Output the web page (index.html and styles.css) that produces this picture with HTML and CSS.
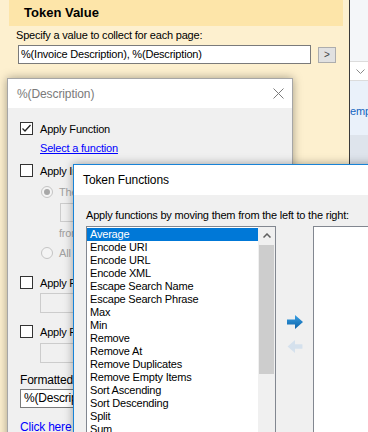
FILE: index.html
```html
<!DOCTYPE html>
<html lang="en">
<head>
    <meta charset="UTF-8">
    <meta name="viewport" content="width=device-width, initial-scale=1.0">
    <title>Token Functions</title>
    <link rel="stylesheet" href="styles.css">
</head>
<body>
    <div class="desktop">
        <div class="token-panel">
            <div class="panel-header">Token Value</div>
            <div class="panel-label">Specify a value to collect for each page:</div>
            <div class="value-row">
                <div class="value-input">%(Invoice Description), %(Description)</div>
                <button class="more-btn">&gt;</button>
            </div>
        </div>

        <div class="side-strip">
            <div class="side-top"></div>
            <div class="side-combo">
                <svg width="9" height="5" viewBox="0 0 9 5"><polyline points="0.5,0.5 4.5,4.5 8.5,0.5" fill="none" stroke="#8a8a8a" stroke-width="1"/></svg>
            </div>
            <div class="side-link">emplates</div>
            <div class="side-grey"></div>
        </div>

        <div class="window desc-window">
            <div class="title-bar">
                <span class="title inactive">%(Description)</span>
                <svg class="close-icon" width="11" height="11" viewBox="0 0 11 11"><path d="M0.5 0.5 L10.5 10.5 M10.5 0.5 L0.5 10.5" stroke="#7a7a7a" stroke-width="1"/></svg>
            </div>
            <div class="desc-body">
                <div class="check-row first">
                    <span class="checkbox">
                        <svg width="11" height="11" viewBox="0 0 11 11"><polyline points="1.5,5.5 4,8 9.5,2" fill="none" stroke="#222" stroke-width="1.3"/></svg>
                    </span>
                    <span>Apply Function</span>
                </div>
                <div class="link-row"><a href="#">Select a function</a></div>
                <div class="check-row gap-9">
                    <span class="checkbox"></span>
                    <span>Apply Index</span>
                </div>
                <div class="radio-row gap-9">
                    <span class="radio checked"></span>
                    <span>The item at position</span>
                </div>
                <div class="textbox disabled indent-2"></div>
                <div class="muted-row">from the end</div>
                <div class="radio-row gap-8">
                    <span class="radio"></span>
                    <span>All items</span>
                </div>
                <div class="check-row gap-17">
                    <span class="checkbox"></span>
                    <span>Apply Format</span>
                </div>
                <div class="textbox disabled indent-1 tall gap-4"></div>
                <div class="check-row gap-12">
                    <span class="checkbox"></span>
                    <span>Apply Filter</span>
                </div>
                <div class="textbox disabled indent-1 tall gap-5"></div>
                <div class="plain-row">Formatted Token:</div>
                <div class="textbox filled">%(Description)</div>
                <div class="link-row bottom"><a href="#">Click here to test</a></div>
            </div>
        </div>

        <div class="window fn-window">
            <div class="title-bar">
                <span class="title">Token Functions</span>
            </div>
            <div class="fn-body">
                <div class="fn-label">Apply functions by moving them from the left to the right:</div>
                <div class="fn-lists">
                    <div class="listbox source">
                        <div class="list-items">
                            <div class="list-item selected">Average</div>
                            <div class="list-item">Encode URI</div>
                            <div class="list-item">Encode URL</div>
                            <div class="list-item">Encode XML</div>
                            <div class="list-item">Escape Search Name</div>
                            <div class="list-item">Escape Search Phrase</div>
                            <div class="list-item">Max</div>
                            <div class="list-item">Min</div>
                            <div class="list-item">Remove</div>
                            <div class="list-item">Remove At</div>
                            <div class="list-item">Remove Duplicates</div>
                            <div class="list-item">Remove Empty Items</div>
                            <div class="list-item">Sort Ascending</div>
                            <div class="list-item">Sort Descending</div>
                            <div class="list-item">Split</div>
                            <div class="list-item">Sum</div>
                        </div>
                        <div class="scrollbar">
                            <div class="scroll-btn">
                                <svg width="8" height="5" viewBox="0 0 8 5"><polyline points="0.5,4.5 4,1 7.5,4.5" fill="none" stroke="#606060" stroke-width="1.5"/></svg>
                            </div>
                            <div class="scroll-thumb"></div>
                            <div class="scroll-space"></div>
                            <div class="scroll-btn">
                                <svg width="8" height="5" viewBox="0 0 8 5"><polyline points="0.5,0.5 4,4 7.5,0.5" fill="none" stroke="#606060" stroke-width="1.5"/></svg>
                            </div>
                        </div>
                    </div>
                    <div class="move-buttons">
                        <svg width="16" height="14" viewBox="0 0 16 14">
                            <defs>
                                <linearGradient id="blueArrow" x1="0" y1="0" x2="0" y2="1">
                                    <stop offset="0" stop-color="#3aa0e4"/>
                                    <stop offset="1" stop-color="#0b62a8"/>
                                </linearGradient>
                            </defs>
                            <path d="M0 4.5 H8 V0 L16 7 L8 14 V9.5 H0 Z" fill="url(#blueArrow)"/>
                        </svg>
                        <svg width="16" height="13" viewBox="0 0 16 14">
                            <path d="M16 4.5 H8 V0 L0 7 L8 14 V9.5 H16 Z" fill="#d5e1ed"/>
                        </svg>
                    </div>
                    <div class="listbox target"></div>
                </div>
            </div>
        </div>
    </div>
</body>
</html>
```

FILE: styles.css
```css
* {
    box-sizing: border-box;
}

body {
    margin: 0;
    font-family: "Liberation Sans", Arial, sans-serif;
    font-size: 11px;
    letter-spacing: -0.2px;
    color: #000;
    background: #fff;
}

.desktop {
    position: relative;
    display: flex;
    width: 368px;
    height: 432px;
    overflow: hidden;
}

/* token value panel behind the dialogs */
.token-panel {
    width: 350px;
    height: 432px;
    flex-shrink: 0;
    padding-left: 9px;
    background: #fdf0cf;
    border-right: 1px solid #3a3a3a;
}

.panel-header {
    width: 334px;
    height: 26px;
    padding-left: 15px;
    line-height: 26px;
    font-size: 13px;
    font-weight: bold;
    letter-spacing: 0;
    background: #fde5a9;
}

.panel-label {
    margin-top: 3px;
    padding-left: 7px;
    height: 13px;
    line-height: 13px;
}

.value-row {
    display: flex;
    align-items: flex-start;
    margin-top: 3px;
    padding-left: 9px;
}

.value-input {
    width: 293px;
    height: 19px;
    padding-left: 2px;
    line-height: 17px;
    background: #fff;
    border: 1px solid #7a7a7a;
}

.more-btn {
    width: 18px;
    height: 16px;
    margin: 2px 0 0 7px;
    padding: 0;
    font-family: inherit;
    font-size: 10px;
    line-height: 14px;
    color: #444;
    background: #e1e1e1;
    border: 1px solid #adadad;
}

.side-strip {
    flex: 1;
    display: flex;
    flex-direction: column;
    overflow: hidden;
}

.side-top {
    height: 61px;
    background: #f4f6f9;
}

.side-combo {
    height: 20px;
    padding: 7px 0 0 6px;
    background: #fff;
    border-top: 1px solid #dcdcdc;
    border-bottom: 1px solid #dcdcdc;
}

.side-combo svg {
    display: block;
}

.side-link {
    height: 54px;
    padding-top: 24px;
    color: #1565c0;
    white-space: nowrap;
    background: #eaf1fa;
}

.side-grey {
    flex: 1;
    background: #dee4ec;
}

/* dialog windows */
.window {
    position: absolute;
    display: flex;
    flex-direction: column;
    background: #f0f0f0;
    box-shadow: 0 0 9px rgba(0, 0, 0, 0.35);
}

.title-bar {
    display: flex;
    align-items: center;
    justify-content: space-between;
    flex-shrink: 0;
    height: 29px;
    padding: 0 9px;
    background: #fff;
}

.title {
    font-size: 12px;
    letter-spacing: -0.1px;
}

.title.inactive {
    color: #7a7a7a;
}

.close-icon {
    margin-right: -1px;
}

.desc-window {
    left: 7px;
    top: 78px;
    width: 286px;
    height: 380px;
    border: 1px solid #a6a6a6;
}

.desc-body {
    padding-left: 12px;
    white-space: nowrap;
}

.check-row, .radio-row {
    display: flex;
    align-items: center;
    height: 13px;
}

.check-row {
    gap: 7px;
}

.check-row.first {
    margin-top: 14px;
}

.checkbox {
    display: flex;
    align-items: center;
    justify-content: center;
    flex-shrink: 0;
    width: 13px;
    height: 13px;
    background: #fff;
    border: 1px solid #333;
}

.radio-row {
    gap: 6px;
    height: 12px;
    padding-left: 21px;
    color: #a0a0a0;
}

.radio {
    position: relative;
    flex-shrink: 0;
    width: 12px;
    height: 12px;
    border: 1px solid #c4c4c4;
    border-radius: 50%;
    background: #f4f4f4;
}

.radio.checked::after {
    content: "";
    position: absolute;
    left: 2px;
    top: 2px;
    width: 6px;
    height: 6px;
    border-radius: 50%;
    background: #a8a8a8;
}

.gap-4 { margin-top: 4px; }
.gap-5 { margin-top: 5px; }
.gap-8 { margin-top: 8px; }
.gap-9 { margin-top: 9px; }
.gap-12 { margin-top: 12px; }
.gap-17 { margin-top: 17px; }

.link-row {
    height: 14px;
    margin-top: 6px;
    padding-left: 20px;
    line-height: 14px;
}

.link-row a {
    color: #0000ff;
}

.link-row.bottom {
    margin-top: 12px;
    padding-left: 0;
    font-size: 12px;
}

.link-row.bottom a {
    text-decoration: none;
}

.textbox {
    width: 210px;
    height: 19px;
    border: 1px solid #7a7a7a;
}

.textbox.disabled {
    background: #f0f0f0;
    border-color: #cccccc;
}

.textbox.indent-2 {
    margin: 5px 0 0 40px;
}

.textbox.indent-1 {
    margin-left: 20px;
}

.textbox.tall {
    height: 20px;
}

.textbox.filled {
    margin-top: 2px;
    padding-left: 3px;
    line-height: 17px;
    font-size: 12px;
    background: #fff;
}

.muted-row {
    height: 12px;
    margin-top: 5px;
    padding-left: 39px;
    line-height: 12px;
    color: #a0a0a0;
}

.plain-row {
    height: 14px;
    margin-top: 10px;
    line-height: 14px;
    font-size: 12px;
}

.fn-window {
    left: 73px;
    top: 164px;
    width: 340px;
    height: 300px;
    border: 1px solid #1883d7;
}

.fn-window .title-bar {
    height: 30px;
}

.fn-body {
    padding-left: 12px;
}

.fn-label {
    height: 14px;
    margin-top: 13px;
    line-height: 14px;
    white-space: nowrap;
}

.fn-lists {
    display: flex;
    margin-top: 4px;
}

.listbox {
    flex-shrink: 0;
    height: 220px;
    background: #fff;
    border: 1px solid #828790;
}

.listbox.source {
    display: flex;
    width: 190px;
}

.listbox.target {
    width: 100px;
}

.list-items {
    width: 171px;
    padding-top: 1px;
}

.list-item {
    height: 13px;
    padding-left: 3px;
    line-height: 13px;
    white-space: nowrap;
}

.list-item.selected {
    color: #fff;
    background: #0078d7;
}

.scrollbar {
    display: flex;
    flex-direction: column;
    width: 17px;
    background: #f0f0f0;
}

.scroll-btn {
    display: flex;
    align-items: center;
    justify-content: center;
    height: 17px;
}

.scroll-thumb {
    height: 129px;
    margin: 1px 1px 0;
    background: #cdcdcd;
}

.scroll-space {
    flex: 1;
}

.move-buttons {
    display: flex;
    flex-direction: column;
    align-items: center;
    flex-shrink: 0;
    gap: 11px;
    width: 37px;
    padding-top: 89px;
}
```
